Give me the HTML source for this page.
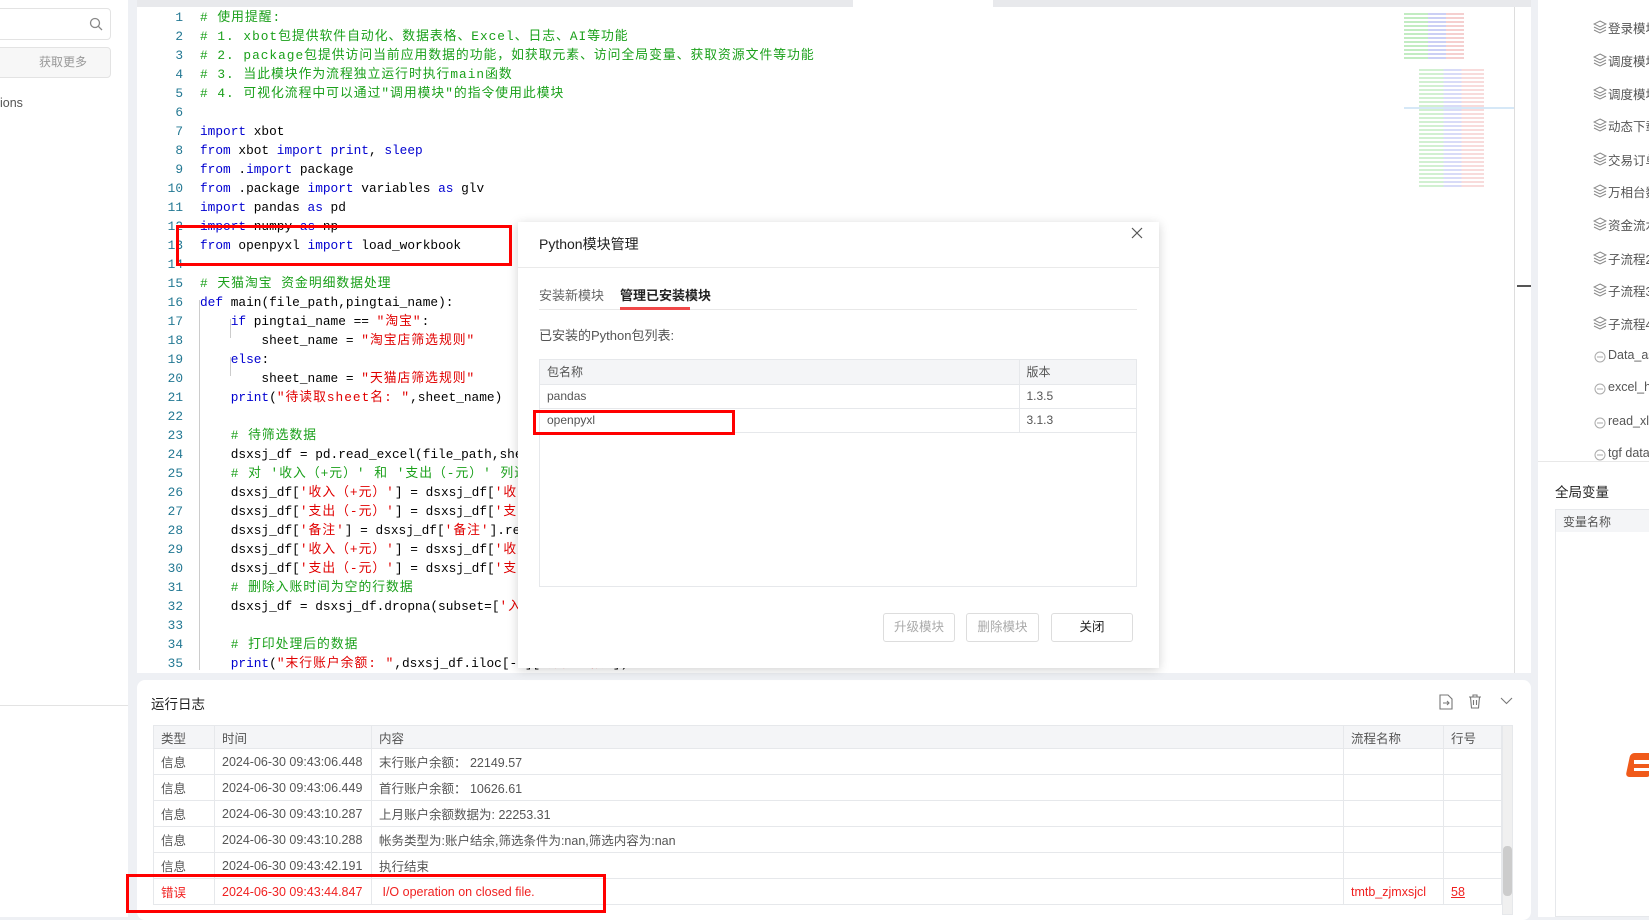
<!DOCTYPE html>
<html><head><meta charset="utf-8"><style>
*{margin:0;padding:0;box-sizing:border-box}
body{width:1649px;height:917px;overflow:hidden;background:#eef0f4;font-family:"Liberation Sans","Noto Sans CJK SC",sans-serif;position:relative;color:#333}
.abs{position:absolute}
#left{left:0;top:0;width:128px;height:917px;background:#fff}
#editor{left:137px;top:7px;width:1394px;height:666px;background:#fff;overflow:hidden}
.code{position:absolute;left:0;top:1px;font-family:"Liberation Mono","Noto Sans CJK SC",monospace;font-size:12.8px;line-height:19px;white-space:pre}
.ln{position:absolute;left:0;width:46px;text-align:right;color:#237893}
.tx{position:absolute;left:63px;color:#000}
.c{color:#1aa01a;letter-spacing:1px}.k{color:#0000d0}.s{color:#e00000;letter-spacing:1px}
#right{left:1538px;top:0;width:111px;height:917px;background:#fff;overflow:hidden}
.ri{position:absolute;left:70px;font-size:12.5px;color:#555;white-space:nowrap}
#log{left:137px;top:680px;width:1394px;height:240px;background:#fff;border-radius:8px}
table{border-collapse:collapse;font-size:12.5px}
#lt{position:absolute;left:16px;top:45px;width:1349px}
#lt td{height:26px;border:1px solid #e6e8eb;padding-left:7px;color:#555;white-space:nowrap}
#lt tr.h td{background:#f4f5f7;height:23px}
.err td{color:#f02020!important}
#dlg{left:518px;top:222px;width:641px;height:446px;background:#fff;box-shadow:0 2px 10px rgba(0,0,0,.18)}
#pt{position:absolute;left:21px;top:137px;width:598px;height:228px;border:1px solid #e6e8eb}
#pt td{height:24px;border-bottom:1px solid #e6e8eb;padding-left:7px;font-size:12px;color:#555}
#pt tr.h td{background:#f4f5f7}
.btn{position:absolute;top:391px;height:29px;border:1px solid #ddd;border-radius:3px;font-size:12.5px;text-align:center;line-height:27px;color:#aaa;background:#fff}
.red{position:absolute;border:3px solid #f00}
</style></head><body>
<div id="left" class="abs">
 <div class="abs" style="left:-5px;top:8px;width:116px;height:32px;border:1px solid #e3e3e3;border-radius:4px"></div>
 <svg class="abs" style="left:89px;top:17px" width="14" height="14" viewBox="0 0 14 14"><circle cx="6" cy="6" r="4.5" fill="none" stroke="#888" stroke-width="1.3"/><path d="M9.3 9.3L13 13" stroke="#888" stroke-width="1.3"/></svg>
 <div class="abs" style="left:-5px;top:47px;width:116px;height:31px;border:1px solid #e3e3e3;border-radius:4px;background:#f7f7f7;font-size:12px;color:#999;text-align:center;line-height:29px;padding-left:20px">获取更多</div>
 <div class="abs" style="left:0;top:96px;font-size:12.5px;color:#555">ions</div>
 <div class="abs" style="left:0;top:705px;width:128px;height:1px;background:#e3e3e3"></div>
</div>
<div class="abs" style="left:137px;top:0;width:1394px;height:7px;background:#e8e9ec"></div>
<div class="abs" style="left:853px;top:0;width:140px;height:7px;background:#fff"></div>
<div id="editor" class="abs">
 <div class="code">
<div class="ln" style="top:0">1</div><div class="tx" style="top:0"><span class="c"># 使用提醒:</span></div>
<div class="ln" style="top:19px">2</div><div class="tx" style="top:19px"><span class="c"># 1. xbot包提供软件自动化、数据表格、Excel、日志、AI等功能</span></div>
<div class="ln" style="top:38px">3</div><div class="tx" style="top:38px"><span class="c"># 2. package包提供访问当前应用数据的功能，如获取元素、访问全局变量、获取资源文件等功能</span></div>
<div class="ln" style="top:57px">4</div><div class="tx" style="top:57px"><span class="c"># 3. 当此模块作为流程独立运行时执行main函数</span></div>
<div class="ln" style="top:76px">5</div><div class="tx" style="top:76px"><span class="c"># 4. 可视化流程中可以通过"调用模块"的指令使用此模块</span></div>
<div class="ln" style="top:95px">6</div>
<div class="ln" style="top:114px">7</div><div class="tx" style="top:114px"><span class="k">import</span> xbot</div>
<div class="ln" style="top:133px">8</div><div class="tx" style="top:133px"><span class="k">from</span> xbot <span class="k">import</span> <span class="k">print</span>, <span class="k">sleep</span></div>
<div class="ln" style="top:152px">9</div><div class="tx" style="top:152px"><span class="k">from</span> .<span class="k">import</span> package</div>
<div class="ln" style="top:171px">10</div><div class="tx" style="top:171px"><span class="k">from</span> .package <span class="k">import</span> variables <span class="k">as</span> glv</div>
<div class="ln" style="top:190px">11</div><div class="tx" style="top:190px"><span class="k">import</span> pandas <span class="k">as</span> pd</div>
<div class="ln" style="top:209px">12</div><div class="tx" style="top:209px"><span class="k">import</span> numpy <span class="k">as</span> np</div>
<div class="ln" style="top:228px">13</div><div class="tx" style="top:228px"><span class="k">from</span> openpyxl <span class="k">import</span> load_workbook</div>
<div class="ln" style="top:247px">14</div>
<div class="ln" style="top:266px">15</div><div class="tx" style="top:266px"><span class="c"># 天猫淘宝 资金明细数据处理</span></div>
<div class="ln" style="top:285px">16</div><div class="tx" style="top:285px"><span class="k">def</span> main(file_path,pingtai_name):</div>
<div class="ln" style="top:304px">17</div><div class="tx" style="top:304px">    <span class="k">if</span> pingtai_name == <span class="s">"淘宝"</span>:</div>
<div class="ln" style="top:323px">18</div><div class="tx" style="top:323px">        sheet_name = <span class="s">"淘宝店筛选规则"</span></div>
<div class="ln" style="top:342px">19</div><div class="tx" style="top:342px">    <span class="k">else</span>:</div>
<div class="ln" style="top:361px">20</div><div class="tx" style="top:361px">        sheet_name = <span class="s">"天猫店筛选规则"</span></div>
<div class="ln" style="top:380px">21</div><div class="tx" style="top:380px">    <span class="k">print</span>(<span class="s">"待读取sheet名: "</span>,sheet_name)</div>
<div class="ln" style="top:399px">22</div>
<div class="ln" style="top:418px">23</div><div class="tx" style="top:418px">    <span class="c"># 待筛选数据</span></div>
<div class="ln" style="top:437px">24</div><div class="tx" style="top:437px">    dsxsj_df = pd.read_excel(file_path,sheet_name=sheet_name)</div>
<div class="ln" style="top:456px">25</div><div class="tx" style="top:456px">    <span class="c"># 对 '收入（+元）' 和 '支出（-元）' 列进行处理</span></div>
<div class="ln" style="top:475px">26</div><div class="tx" style="top:475px">    dsxsj_df[<span class="s">'收入（+元）'</span>] = dsxsj_df[<span class="s">'收入'</span>]</div>
<div class="ln" style="top:494px">27</div><div class="tx" style="top:494px">    dsxsj_df[<span class="s">'支出（-元）'</span>] = dsxsj_df[<span class="s">'支出'</span>]</div>
<div class="ln" style="top:513px">28</div><div class="tx" style="top:513px">    dsxsj_df[<span class="s">'备注'</span>] = dsxsj_df[<span class="s">'备注'</span>].replace()</div>
<div class="ln" style="top:532px">29</div><div class="tx" style="top:532px">    dsxsj_df[<span class="s">'收入（+元）'</span>] = dsxsj_df[<span class="s">'收入'</span>]</div>
<div class="ln" style="top:551px">30</div><div class="tx" style="top:551px">    dsxsj_df[<span class="s">'支出（-元）'</span>] = dsxsj_df[<span class="s">'支出'</span>]</div>
<div class="ln" style="top:570px">31</div><div class="tx" style="top:570px">    <span class="c"># 删除入账时间为空的行数据</span></div>
<div class="ln" style="top:589px">32</div><div class="tx" style="top:589px">    dsxsj_df = dsxsj_df.dropna(subset=[<span class="s">'入账时间'</span>])</div>
<div class="ln" style="top:608px">33</div>
<div class="ln" style="top:627px">34</div><div class="tx" style="top:627px">    <span class="c"># 打印处理后的数据</span></div>
<div class="ln" style="top:646px">35</div><div class="tx" style="top:646px">    <span class="k">print</span>(<span class="s">"末行账户余额: "</span>,dsxsj_df.iloc[-1][<span class="s">'账户余额'</span>])</div>
 </div>
 <div class="abs" style="left:62px;top:293px;width:1px;height:370px;background:#ccc"></div>
 <div class="abs" style="left:93px;top:312px;width:1px;height:19px;background:#ccc"></div>
 <div class="abs" style="left:93px;top:350px;width:1px;height:19px;background:#ccc"></div>
 <!-- minimap -->
 <div class="abs" style="left:1267px;top:4px;width:60px;height:50px;background:repeating-linear-gradient(#fff 0 2px,transparent 2px 4px),linear-gradient(90deg,#9be09b 0 40%,#aab0ee 40% 70%,#f0b0b0 70%);opacity:.6"></div>
 <div class="abs" style="left:1275px;top:60px;width:90px;height:120px;background:repeating-linear-gradient(#fff 0 2px,transparent 2px 4px),linear-gradient(90deg,#fff 0 8%,#9be09b 8% 35%,#aab0ee 35% 55%,#f0b0b0 55% 80%,#fff 80%);opacity:.45"></div>
 <div class="abs" style="left:1267px;top:100px;width:110px;height:2px;background:#d6e8f7"></div>
 <div class="abs" style="left:1377px;top:0;width:1px;height:666px;background:#ddd"></div>
 <div class="abs" style="left:1380px;top:278px;width:14px;height:2px;background:#555"></div>
</div>
<div class="red" style="left:176px;top:225px;width:336px;height:41px"></div>

<div id="right" class="abs">
 <div class="ri" style="top:18px">登录模块</div><div class="ri" style="top:51px">调度模块</div><div class="ri" style="top:84px">调度模块</div><div class="ri" style="top:116px">动态下载</div><div class="ri" style="top:150px">交易订单</div><div class="ri" style="top:182px">万相台数据</div><div class="ri" style="top:215px">资金流水</div><div class="ri" style="top:249px">子流程2</div><div class="ri" style="top:281px">子流程3</div><div class="ri" style="top:314px">子流程4</div><div class="ri" style="top:348px">Data_as</div><div class="ri" style="top:380px">excel_h</div><div class="ri" style="top:414px">read_xl</div><div class="ri" style="top:446px">tgf data</div>
 <svg class="abs" style="left:55px;top:20px" width="14" height="460" viewBox="0 0 14 460" fill="none" stroke="#888" stroke-width="1">
  <g id="lay"><path d="M7 1L13 4 7 7 1 4Z M1 7l6 3 6-3 M1 10l6 3 6-3"/></g>
  <use href="#lay" y="33"/><use href="#lay" y="66"/><use href="#lay" y="98"/><use href="#lay" y="132"/><use href="#lay" y="164"/><use href="#lay" y="197"/><use href="#lay" y="231"/><use href="#lay" y="263"/><use href="#lay" y="296"/>
  <g id="py" stroke="#aaa"><circle cx="7" cy="337" r="5"/><path d="M4 337H10"/></g>
  <use href="#py" y="32"/><use href="#py" y="66"/><use href="#py" y="98"/>
 </svg>
 <div class="abs" style="left:0;top:461px;width:111px;height:1px;background:#e8e8e8"></div>
 <div class="abs" style="left:17px;top:481px;font-size:13.5px;color:#222">全局变量</div>
 <div class="abs" style="left:17px;top:509px;width:100px;height:408px;border:1px solid #e6e8eb"></div>
 <div class="abs" style="left:18px;top:510px;width:100px;height:22px;background:#f4f5f7;font-size:12px;color:#555;padding:3px 7px">变量名称</div>
 <div class="abs" style="left:90px;top:753px;width:25px;height:24px;background:#f05a1a;border-radius:4px;transform:skewX(-12deg)"></div>
 <div class="abs" style="left:96px;top:760px;width:18px;height:4px;background:#fff"></div>
 <div class="abs" style="left:96px;top:768px;width:18px;height:3px;background:#fff"></div>
</div>

<div id="log" class="abs">
 <div class="abs" style="left:14px;top:13px;font-size:13.5px;color:#222">运行日志</div>
 <svg class="abs" style="left:1302px;top:14px" width="14" height="16" viewBox="0 0 14 16" fill="none" stroke="#777" stroke-width="1.1"><path d="M1 1H9L13 5V15H1Z M4 9H10 M8 7L10 9 8 11"/></svg>
 <svg class="abs" style="left:1331px;top:14px" width="14" height="15" viewBox="0 0 14 15" fill="none" stroke="#777" stroke-width="1.1"><path d="M1 3H13 M5 3V1H9V3 M2.5 3L3.5 14H10.5L11.5 3 M5.5 6V11 M8.5 6V11"/></svg>
 <svg class="abs" style="left:1363px;top:17px" width="13" height="8" viewBox="0 0 13 8" fill="none" stroke="#777" stroke-width="1.1"><path d="M1 1L6.5 6.5 12 1"/></svg>
 <table id="lt">
  <tr class="h"><td style="width:61px">类型</td><td style="width:157px">时间</td><td style="width:972px">内容</td><td style="width:100px">流程名称</td><td>行号</td></tr>
  <tr><td>信息</td><td>2024-06-30 09:43:06.448</td><td>末行账户余额：&nbsp;22149.57</td><td></td><td></td></tr>
  <tr><td>信息</td><td>2024-06-30 09:43:06.449</td><td>首行账户余额：&nbsp;10626.61</td><td></td><td></td></tr>
  <tr><td>信息</td><td>2024-06-30 09:43:10.287</td><td>上月账户余额数据为: 22253.31</td><td></td><td></td></tr>
  <tr><td>信息</td><td>2024-06-30 09:43:10.288</td><td>帐务类型为:账户结余,筛选条件为:nan,筛选内容为:nan</td><td></td><td></td></tr>
  <tr><td>信息</td><td>2024-06-30 09:43:42.191</td><td>执行结束</td><td></td><td></td></tr>
  <tr class="err"><td>错误</td><td>2024-06-30 09:43:44.847</td><td>&nbsp;I/O operation on closed file.</td><td>tmtb_zjmxsjcl</td><td><u>58</u></td></tr>
 </table>
 <div class="abs" style="left:1365px;top:45px;width:11px;height:190px;background:#f0f0f0;border:1px solid #e6e8eb"></div>
 <div class="abs" style="left:1366px;top:166px;width:9px;height:50px;background:#ccc;border-radius:4px"></div>
</div>
<div class="red" style="left:126px;top:874px;width:480px;height:39px"></div>

<div id="dlg" class="abs">
 <div class="abs" style="left:21px;top:12px;font-size:14px;color:#222">Python模块管理</div>
 <svg class="abs" style="left:613px;top:5px" width="12" height="12" viewBox="0 0 12 12" stroke="#555" stroke-width="1.2"><path d="M1 1L11 11M11 1L1 11"/></svg>
 <div class="abs" style="left:0;top:45px;width:641px;height:1px;background:#eaeaea"></div>
 <div class="abs" style="left:21px;top:63px;font-size:13px;color:#666">安装新模块</div>
 <div class="abs" style="left:102px;top:63px;font-size:13px;color:#222;font-weight:bold">管理已安装模块</div>
 <div class="abs" style="left:21px;top:87px;width:598px;height:1px;background:#e8e8e8"></div>
 <div class="abs" style="left:102px;top:85px;width:70px;height:3px;background:#f04848"></div>
 <div class="abs" style="left:21px;top:103px;font-size:13px;color:#555">已安装的Python包列表:</div>
 <div id="pt"><table style="width:100%">
  <tr class="h"><td style="width:479px;border-right:1px solid #e6e8eb">包名称</td><td>版本</td></tr>
  <tr><td style="border-right:1px solid #e6e8eb">pandas</td><td>1.3.5</td></tr>
  <tr><td style="border-right:1px solid #e6e8eb">openpyxl</td><td>3.1.3</td></tr>
 </table></div>
 <div class="red" style="left:15px;top:188px;width:202px;height:25px"></div>
 <div class="btn" style="left:365px;width:72px">升级模块</div>
 <div class="btn" style="left:448px;width:73px">删除模块</div>
 <div class="btn" style="left:533px;width:82px;color:#222">关闭</div>
</div>
</body></html>
